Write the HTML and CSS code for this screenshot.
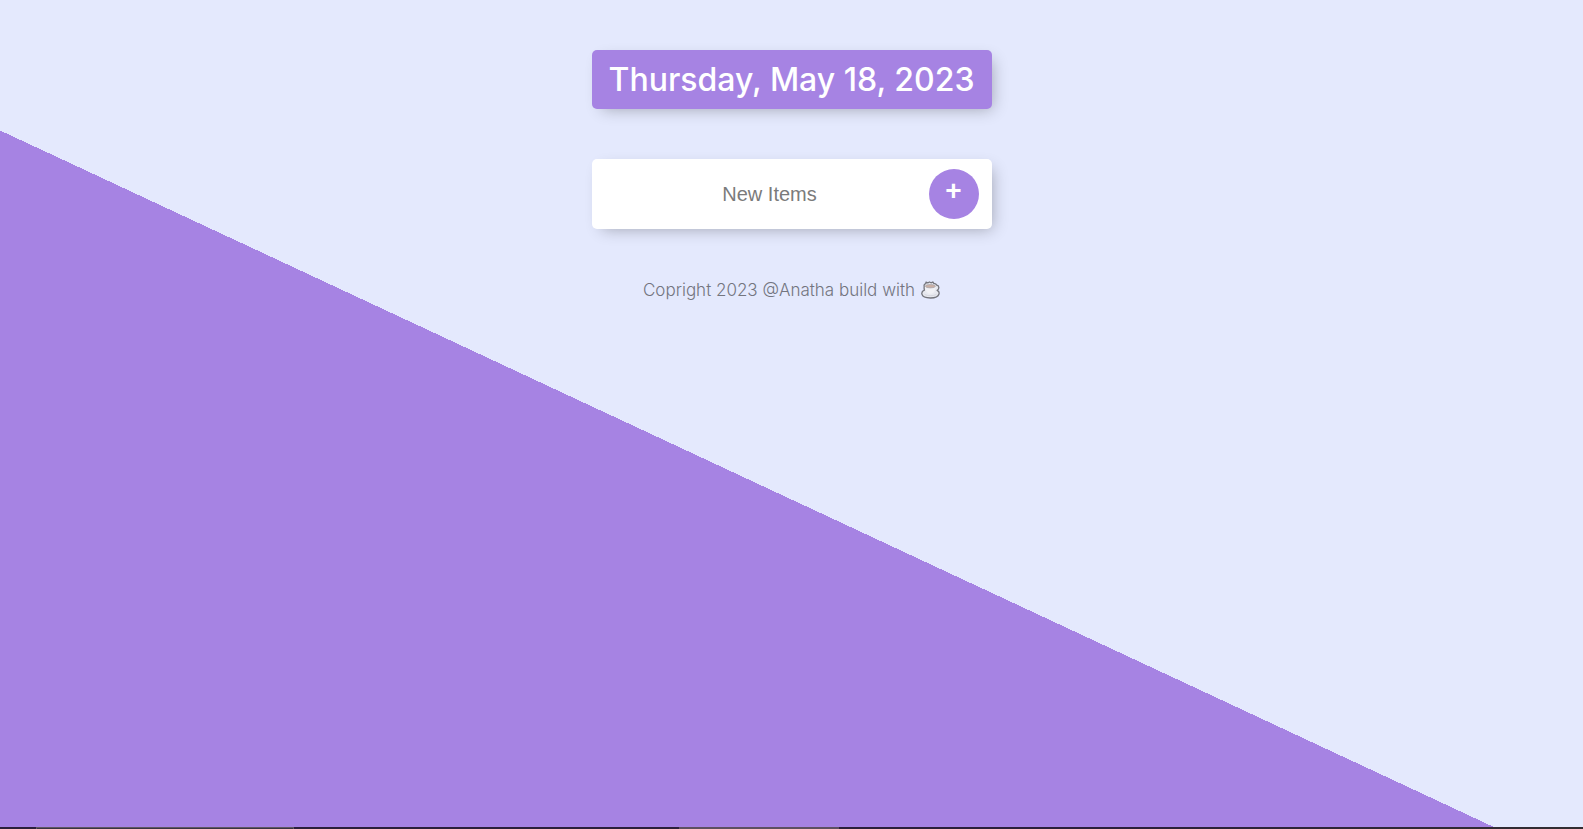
FILE: index.html
```html
<!DOCTYPE html>
<html lang="en">
<head>
<meta charset="utf-8">
<title>To Do List</title>
<link rel="stylesheet" href="styles.css">
</head>
<body>
<main class="page">
  <header class="box heading">
    <h1 class="heading-title">Thursday, May 18, 2023</h1>
  </header>
  <form class="box item-form">
    <input class="item-input" type="text" name="newItem" placeholder="New Items" aria-label="New Items" autocomplete="off">
    <button class="item-add" type="submit" aria-label="Add item">+</button>
  </form>
  <footer class="footer">
    <span>Copright 2023 @Anatha build with</span>
    <svg class="cup" viewBox="0 0 19 18" aria-hidden="true">
      <path d="M3.200 5.500C2.800 4 3.500 2.800 4.800 2.600L5 1.200L6.800 1.800L8.500 1L10 1.800L11.800 1L12.800 2.400C14.500 2.500 15.500 3.200 15.800 4.200C18.200 4.400 18.600 8.200 16.200 9.400C17.800 10.200 18.400 11.500 18 13C17.200 15.800 13.500 17 9.500 17C5.200 17 1.500 15.800 .9 13.200C.5 11.500 1.500 10 3.400 9.200C3.100 8 3 6.800 3.200 5.500Z" fill="#e8e9ef" stroke="#74757c" stroke-width="1.300" stroke-linejoin="round"/>
      <path d="M4.200 5.500C4.200 9.500 6 12.800 9.400 12.800C12.800 12.800 14.600 9.500 14.600 5.500Z" fill="#f1f1f5"/>
      <ellipse cx="9.400" cy="5.200" rx="5" ry="1.700" fill="#cbb0a5" stroke="#aaa8ae" stroke-width=".8"/>
      <path d="M3.500 13.200C6.500 15.200 12.500 15.200 15.500 13.200" fill="none" stroke="#cfd0d8" stroke-width=".8"/>
    </svg>
  </footer>
</main>
<div class="taskbar" aria-hidden="true">
  <span class="taskbar-search"></span>
  <span class="taskbar-app"></span>
</div>
</body>
</html>
```
FILE: styles.css
```css
* {
  box-sizing: border-box;
}

html {
  background: #e4e9fd;
}

body {
  display: flex;
  flex-direction: column;
  min-height: 100vh;
  margin: 0;
  background-color: #e4e9fd;
  background-image: linear-gradient(25deg, #a683e3 50%, #e4e9fd 50%);
  background-size: 100% calc(100vh + 170px);
  background-repeat: no-repeat;
  font-family: Inter, "Open Sans", sans-serif;
}

.page {
  flex: 1;
  padding: 50px 0;
}

.box {
  max-width: 400px;
  margin: 0 auto 50px;
  background: #fff;
  border-radius: 5px;
  box-shadow: 5px 5px 15px -5px rgba(0, 0, 0, 0.3);
}

.heading {
  padding: 10px;
  background: #a683e3;
  text-align: center;
}

.heading-title {
  margin: 0;
  color: #fff;
  font-size: 32px;
  font-weight: 500;
  line-height: 39px;
  white-space: nowrap;
}

.item-form {
  display: flex;
  align-items: center;
  min-height: 70px;
  padding: 0 13px 0 19px;
}

.item-input {
  flex: 1;
  min-width: 0;
  height: 60px;
  padding: 0;
  border: 0;
  outline: 0;
  background: transparent;
  font-family: "Liberation Sans", Arial, sans-serif;
  font-size: 20px;
  text-align: center;
}

.item-input::placeholder {
  color: #7b7b7b;
}

.item-add {
  width: 50px;
  height: 50px;
  padding: 0 0 6px;
  border: 0;
  border-radius: 50%;
  background: #a683e3;
  color: #fff;
  font-family: "Liberation Sans", Arial, sans-serif;
  font-size: 28px;
  font-weight: 700;
}

.footer {
  display: flex;
  align-items: center;
  justify-content: center;
  gap: 6px;
  color: #73757f;
  font-size: 17px;
  font-weight: 300;
  line-height: 22px;
}

.cup {
  width: 19px;
  height: 18px;
}

.taskbar {
  display: grid;
  grid-template-columns: 36fr 258fr 385fr 160fr 744fr;
  height: 2px;
  background: linear-gradient(90deg, #2b1f3b 70%, #322d31);
}

.taskbar-search {
  grid-column: 2;
  border: solid #5f5762;
  border-width: 1px 1px 0;
  background: #393344;
}

.taskbar-app {
  grid-column: 4;
  background: #5d5061;
}
```
